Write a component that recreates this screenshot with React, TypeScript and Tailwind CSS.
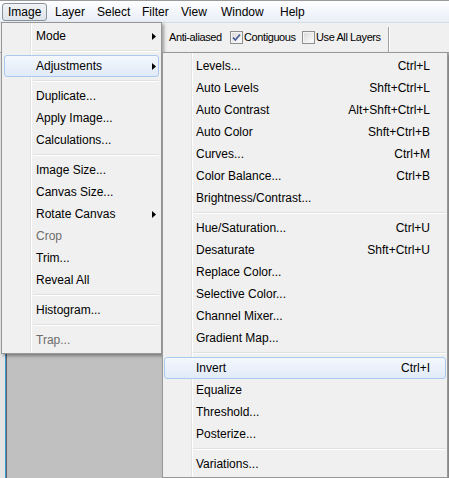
import React from 'react';

type Item = { label: string; arrow?: boolean; hi?: boolean; dis?: boolean; sc?: string } | 'sep';

const mainItems: Item[] = [
  { label: 'Mode', arrow: true },
  'sep',
  { label: 'Adjustments', arrow: true, hi: true },
  'sep',
  { label: 'Duplicate...' },
  { label: 'Apply Image...' },
  { label: 'Calculations...' },
  'sep',
  { label: 'Image Size...' },
  { label: 'Canvas Size...' },
  { label: 'Rotate Canvas', arrow: true },
  { label: 'Crop', dis: true },
  { label: 'Trim...' },
  { label: 'Reveal All' },
  'sep',
  { label: 'Histogram...' },
  'sep',
  { label: 'Trap...', dis: true },
];

const subItems: Item[] = [
  { label: 'Levels...', sc: 'Ctrl+L' },
  { label: 'Auto Levels', sc: 'Shft+Ctrl+L' },
  { label: 'Auto Contrast', sc: 'Alt+Shft+Ctrl+L' },
  { label: 'Auto Color', sc: 'Shft+Ctrl+B' },
  { label: 'Curves...', sc: 'Ctrl+M' },
  { label: 'Color Balance...', sc: 'Ctrl+B' },
  { label: 'Brightness/Contrast...' },
  'sep',
  { label: 'Hue/Saturation...', sc: 'Ctrl+U' },
  { label: 'Desaturate', sc: 'Shft+Ctrl+U' },
  { label: 'Replace Color...' },
  { label: 'Selective Color...' },
  { label: 'Channel Mixer...' },
  { label: 'Gradient Map...' },
  'sep',
  { label: 'Invert', sc: 'Ctrl+I', hi: true },
  { label: 'Equalize' },
  { label: 'Threshold...' },
  { label: 'Posterize...' },
  'sep',
  { label: 'Variations...' },
];

function Arrow() {
  return (
    <svg width="4" height="7" viewBox="0 0 4 7" className="block">
      <path d="M0 0L4 3.5L0 7Z" fill="#000" />
    </svg>
  );
}

function MenuList({ items, arrowPr, scPr }: { items: Item[]; arrowPr: string; scPr: string }) {
  return (
    <>
      {items.map((it, i) =>
        it === 'sep' ? (
          <div key={i} className="h-[8px] flex flex-col justify-center pl-[29px]">
            <div className="h-[1px] bg-[#e0e0e0]" />
            <div className="h-[1px] bg-[#ffffff]" />
          </div>
        ) : (
          <div
            key={i}
            className={
              'relative h-[22px] flex items-center pl-[31px] rounded-[3px] border ' +
              (it.hi
                ? 'border-[#a9c9ef] bg-linear-to-b from-[#f4f8fd] to-[#e1eaf8]'
                : 'border-transparent')
            }
          >
            <span className={it.dis ? 'text-[#6d6d6d]' : 'text-black'}>{it.label}</span>
            {it.arrow && (
              <span className={'ml-auto ' + arrowPr}>
                <Arrow />
              </span>
            )}
            {it.sc && <span className={'ml-auto ' + scPr}>{it.sc}</span>}
          </div>
        )
      )}
    </>
  );
}

function Checkbox({ checked }: { checked?: boolean }) {
  return (
    <span className="w-[13px] h-[13px] border border-[#8e8f8f] bg-white flex items-center justify-center">
      <span className="w-[11px] h-[11px] border border-[#f4f4f4] bg-linear-to-br from-[#dcdcdc] to-[#fbfbfb] flex items-center justify-center">
        {checked && (
          <svg width="9" height="9" viewBox="0 0 9 9" className="block">
            <path d="M1 4.5L3.3 7L8 1.5" stroke="#4a5f97" strokeWidth="1.8" fill="none" />
          </svg>
        )}
      </span>
    </span>
  );
}

export default function App() {
  const menubar = [
    { t: 'Layer', w: 'w-[42px]' },
    { t: 'Select', w: 'w-[45px]' },
    { t: 'Filter', w: 'w-[39px]' },
    { t: 'View', w: 'w-[40px]' },
    { t: 'Window', w: 'w-[59px]' },
    { t: 'Help', w: 'w-[40px]' },
  ];
  return (
    <div className="relative w-[449px] h-[478px] overflow-hidden bg-[#f0f0f0] flex flex-col font-['Liberation_Sans',Arial,sans-serif] text-[12px] leading-none text-black">
      {/* menu bar */}
      <div className="h-[23px] shrink-0 flex items-center border-t border-b border-t-[#9a9a9a] border-b-[#d5dbe3] bg-linear-to-b from-[#fdfeff] to-[#e9eef6] pl-[2px]">
        <div className="w-[45px] h-[18px] mr-[3px] flex items-center pl-[5px] rounded-[3px] border border-[#8a939c] bg-linear-to-b from-[#f1f3f6] to-[#dfe4ea]">
          Image
        </div>
        {menubar.map((m) => (
          <div key={m.t} className={m.w + ' pl-[5px]'}>
            {m.t}
          </div>
        ))}
      </div>

      {/* options bar */}
      <div className="h-[30px] shrink-0 flex items-center bg-[#f0f0f0] border-b border-[#a0a0a0] pl-[169px] text-[11px] tracking-[-0.4px]">
        <span className="w-[61px]">Anti-aliased</span>
        <Checkbox checked />
        <span className="w-[59px] pl-[1px]">Contiguous</span>
        <Checkbox />
        <span className="w-[73px] pl-[1px]">Use All Layers</span>
        <div className="self-end flex h-[25px]">
          <div className="w-[1px] bg-[#a0a0a0]" />
          <div className="w-[1px] bg-white" />
        </div>
      </div>

      {/* workspace */}
      <div className="flex-1 flex">
        <div className="w-[5px] bg-[#e3e3e3]" />
        <div className="w-[1px] bg-[#3a9ad9]" />
        <div className="w-[1px] bg-[#5f5f5f]" />
        <div className="flex-1 bg-[#c0c0c0]" />
      </div>

      {/* Image menu */}
      <div className="absolute left-[1px] top-[22px] w-[161px] bg-[#f0f0f0] border border-[#979797] px-[2px] py-[2px] shadow-[2px_2px_3px_rgba(0,0,0,0.35)]">
        <div className="absolute left-[28px] top-0 bottom-0 flex">
          <div className="w-[1px] bg-[#e2e3e3]" />
          <div className="w-[1px] bg-white" />
        </div>
        <MenuList items={mainItems} arrowPr="mr-[2px]" scPr="mr-[16px]" />
      </div>

      {/* Adjustments submenu */}
      <div className="absolute left-[162px] top-[52px] w-[286px] bg-[#f0f0f0] border border-[#979797] px-[1px] py-[2px] shadow-[2px_2px_3px_rgba(0,0,0,0.35)]">
        <div className="absolute left-[28px] top-0 bottom-0 flex">
          <div className="w-[1px] bg-[#e2e3e3]" />
          <div className="w-[1px] bg-white" />
        </div>
        <MenuList items={subItems} arrowPr="mr-[2px]" scPr="mr-[15px]" />
      </div>
    </div>
  );
}
